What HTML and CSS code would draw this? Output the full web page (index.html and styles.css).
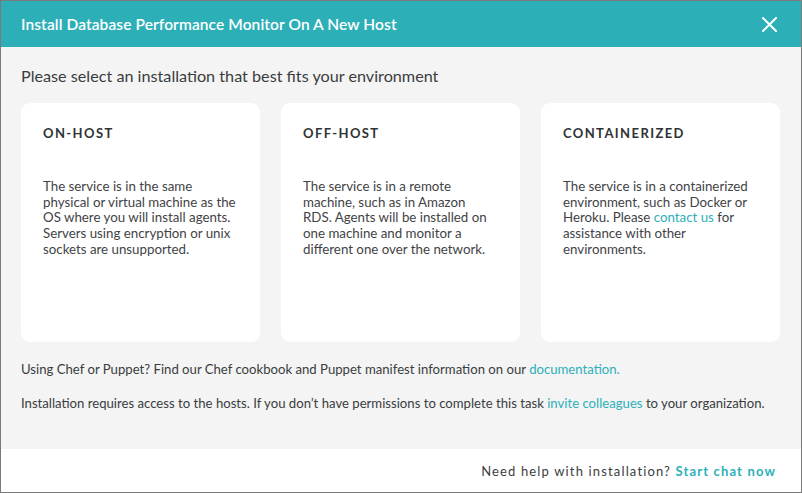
FILE: index.html
```html
<!DOCTYPE html>
<html>
<head>
<meta charset="utf-8">
<link rel="stylesheet" href="styles.css">
</head>
<body>
<div class="modal">
  <header class="modal-header">
    <h1 class="modal-title">Install Database Performance Monitor On A New Host</h1>
    <button class="close" aria-label="Close">
      <svg width="15" height="15" viewBox="0 0 15 15"><path d="M1 1L14 14M14 1L1 14" stroke="#fff" stroke-width="2" stroke-linecap="square"/></svg>
    </button>
  </header>
  <main class="modal-body">
    <p class="intro">Please select an installation that best fits your environment</p>
    <div class="cards">
      <div class="card">
        <h2 class="card-title">ON-HOST</h2>
        <p class="card-text">The service is in the same<br>physical or virtual machine as the<br>OS where you will install agents.<br>Servers using encryption or unix<br>sockets are unsupported.</p>
      </div>
      <div class="card">
        <h2 class="card-title">OFF-HOST</h2>
        <p class="card-text">The service is in a remote<br>machine, such as in Amazon<br>RDS. Agents will be installed on<br>one machine and monitor a<br>different one over the network.</p>
      </div>
      <div class="card">
        <h2 class="card-title">CONTAINERIZED</h2>
        <p class="card-text">The service is in a containerized<br>environment, such as Docker or<br>Heroku. Please <a href="#">contact us</a> for<br>assistance with other<br>environments.</p>
      </div>
    </div>
    <p class="note">Using Chef or Puppet? Find our Chef cookbook and Puppet manifest information on our <a href="#">documentation.</a></p>
    <p class="note">Installation requires access to the hosts. If you don’t have permissions to complete this task <a href="#">invite colleagues</a> to your organization.</p>
  </main>
  <footer class="modal-footer">
    <span>Need help with installation? <a href="#" class="chat">Start chat now</a></span>
  </footer>
</div>
</body>
</html>
```

FILE: styles.css
```css
* { box-sizing: border-box; }
html, body { margin: 0; padding: 0; }
body {
  font-family: "Lato", "Noto Sans", sans-serif;
  color: #3a3d40;
  background: #fff;
}
a { color: #2db0b8; text-decoration: none; }
.modal {
  width: 802px;
  height: 493px;
  border: 1px solid #7a7a7a;
  display: flex;
  flex-direction: column;
  background: #f4f4f4;
}
.modal-header {
  height: 46px;
  background: #2dafb8;
  display: flex;
  align-items: center;
  justify-content: space-between;
  padding: 0 24px 0 20px;
  flex: none;
}
.modal-title {
  margin: 0;
  color: #fff;
  font-size: 15.5px;
  font-weight: 600;
  letter-spacing: 0.1px;
}
.close {
  border: 0;
  background: none;
  padding: 0;
  width: 15px;
  height: 15px;
  display: block;
  cursor: pointer;
}
.close svg { display: block; }
.modal-body {
  flex: 1;
  padding: 20px 20px 0 20px;
}
.intro {
  margin: 0;
  font-size: 16.2px;
  line-height: 18px;
  color: #3a3d40;
}
.cards {
  display: flex;
  gap: 21px;
  margin-top: 18px;
  margin-bottom: 19px;
}
.card {
  width: 239px;
  height: 239px;
  background: #fff;
  border-radius: 9px;
  padding: 22px 22px;
}
.card-title {
  margin: 0;
  font-size: 13px;
  font-weight: 700;
  letter-spacing: 1.4px;
  color: #2f3335;
  line-height: 16px;
}
.card-text {
  margin: 38px 0 0;
  white-space: nowrap;
  font-size: 13.3px;
  line-height: 15.7px;
  color: #3f4346;
}
.note {
  margin: 0 0 18px;
  font-size: 13.15px;
  line-height: 16px;
  color: #3a3d40;
}
.modal-footer {
  flex: none;
  height: 43px;
  background: #fff;
  display: flex;
  align-items: center;
  justify-content: flex-end;
  padding: 0 25px;
  font-size: 13px;
  letter-spacing: 1.15px;
  color: #3a3d40;
}
.chat { font-weight: 700; }
```
